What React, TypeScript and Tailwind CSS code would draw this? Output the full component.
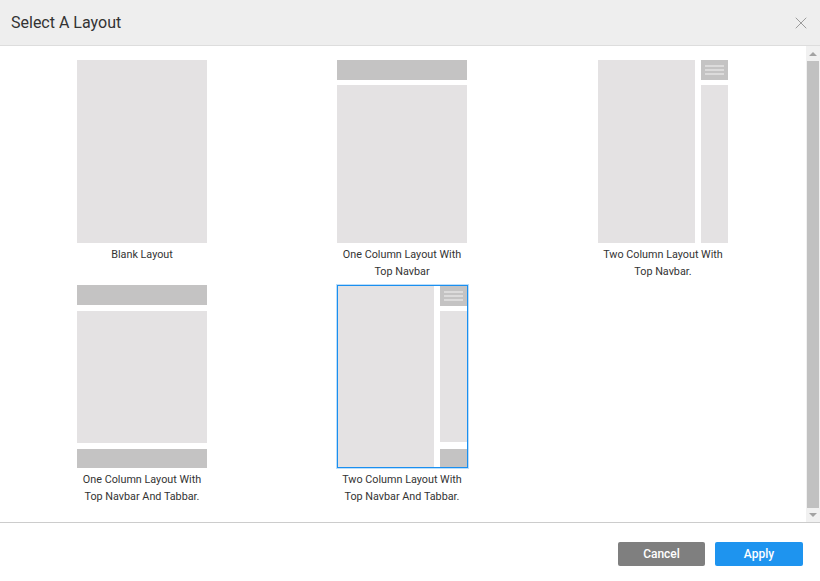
import { X } from 'lucide-react'

type Kind = 'blank' | 'one' | 'two' | 'oneTab' | 'twoTab'

const layouts: { id: Kind; label: string[] }[] = [
  { id: 'blank', label: ['Blank Layout'] },
  { id: 'one', label: ['One Column Layout With', 'Top Navbar'] },
  { id: 'two', label: ['Two Column Layout With', 'Top Navbar.'] },
  { id: 'oneTab', label: ['One Column Layout With', 'Top Navbar And Tabbar.'] },
  { id: 'twoTab', label: ['Two Column Layout With', 'Top Navbar And Tabbar.'] },
]

function MenuBlock() {
  return (
    <div className="flex h-[20px] shrink-0 flex-col items-center justify-center gap-[2px] bg-[#c4c3c3]">
      <div className="h-[2px] w-[19px] bg-[#dcdbdb]" />
      <div className="h-[2px] w-[19px] bg-[#dcdbdb]" />
      <div className="h-[2px] w-[19px] bg-[#dcdbdb]" />
    </div>
  )
}

function Preview({ kind }: { kind: Kind }) {
  if (kind === 'blank') return <div className="h-full bg-[#e4e2e3]" />
  if (kind === 'one')
    return (
      <div className="flex h-full flex-col gap-[5px]">
        <div className="h-[20px] bg-[#c4c3c3]" />
        <div className="flex-1 bg-[#e4e2e3]" />
      </div>
    )
  if (kind === 'oneTab')
    return (
      <div className="flex h-full flex-col gap-[6px]">
        <div className="h-[20px] bg-[#c4c3c3]" />
        <div className="flex-1 bg-[#e4e2e3]" />
        <div className="h-[19px] bg-[#c4c3c3]" />
      </div>
    )
  return (
    <div className="flex h-full gap-[6px]">
      <div className="flex-1 bg-[#e4e2e3]" />
      <div className="flex w-[27px] flex-col">
        <MenuBlock />
        <div className="mt-[5px] flex-1 bg-[#e4e2e3]" />
        {kind === 'twoTab' && <div className="mt-[7px] h-[18px] bg-[#c4c3c3]" />}
      </div>
    </div>
  )
}

export default function App() {
  const selected: Kind = 'twoTab'
  return (
    <div className="flex h-[581px] w-[820px] flex-col overflow-hidden bg-white font-['Roboto',sans-serif] text-[#333]">
      {/* Header */}
      <div className="flex h-[46px] shrink-0 items-center justify-between border-b border-[#dddddd] bg-[#eeeeee] pl-[11px] pr-[9px]">
        <h1 className="text-[16px] font-normal text-[#333]">Select A Layout</h1>
        <X className="size-[20px] text-[#8a8a8a]" strokeWidth={1} />
      </div>

      {/* Body */}
      <div className="flex min-h-0 flex-1">
        <div className="grid flex-1 grid-cols-[260px_260px_262px] content-start pl-[12px] pt-[14px]">
          {layouts.map((l) => (
            <div key={l.id} className="flex h-[225px] flex-col items-center">
              {l.id === selected ? (
                <div className="h-[183px] w-[131px] border border-[#1a8ff0] shadow-[0_0_0_1px_rgba(60,160,240,0.35)]">
                  <Preview kind={l.id} />
                </div>
              ) : (
                <div className="h-[183px] w-[130px]">
                  <Preview kind={l.id} />
                </div>
              )}
              <div className="mt-[3px] text-center text-[10.8px] leading-[17px] text-[#333]">
                {l.label.map((line) => (
                  <div key={line}>{line}</div>
                ))}
              </div>
            </div>
          ))}
        </div>

        {/* Scrollbar */}
        <div className="flex w-[14px] shrink-0 flex-col items-center bg-[#f1f1f1]">
          <div className="flex h-[15px] items-center justify-center">
            <div className="h-0 w-0 border-x-[4px] border-b-[4px] border-x-transparent border-b-[#a3a3a3]" />
          </div>
          <div className="w-[12px] flex-1 bg-[#c1c1c1]" />
          <div className="flex h-[14px] items-center justify-center">
            <div className="h-0 w-0 border-x-[4px] border-t-[4px] border-x-transparent border-t-[#a3a3a3]" />
          </div>
        </div>
      </div>

      {/* Footer */}
      <div className="flex h-[59px] shrink-0 items-center justify-end gap-[10px] border-t border-[#cccccc] pr-[17px] pt-[3px]">
        <button className="h-[24px] w-[87px] rounded-[2px] bg-[#7f7f7f] text-[12px] font-medium text-white">
          Cancel
        </button>
        <button className="h-[24px] w-[88px] rounded-[2px] bg-[#1e94ef] text-[12px] font-medium text-white">
          Apply
        </button>
      </div>
    </div>
  )
}
